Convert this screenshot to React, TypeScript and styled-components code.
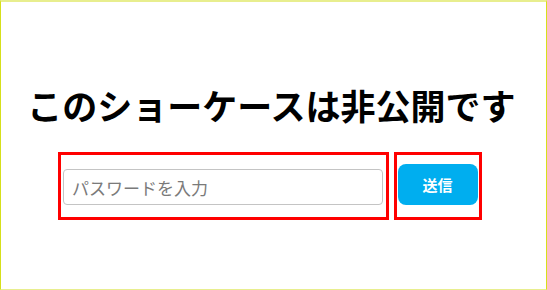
import React from 'react'
import styled, { createGlobalStyle } from 'styled-components'

const Global = createGlobalStyle`
html, body { margin: 0; padding: 0; background: #fff; }
body { font-family: "Noto Sans CJK JP", "Noto Sans", sans-serif; }
* { box-sizing: border-box; }
`

const Page = styled.div`
height: 290px;
border-top: 2px solid #e8ee8e;
border-left: 1px solid #d6e01a;
border-right: 1px solid #d6e01a;
border-bottom: 1px solid #e8ee8e;
display: flex;
flex-direction: column;
align-items: center;
padding-top: 78px;
padding-right: 4px;
`

const Title = styled.h1`
margin: 0;
font-size: 35px;
font-weight: 700;
line-height: 50px;
color: #000;
`

const Form = styled.div`
display: flex;
gap: 5px;
margin-top: 22px;
margin-left: -4px;
`

const Frame = styled.div<{ $w: number }>`
width: ${p => p.$w}px;
height: 68px;
border: 3px solid #ff0000;
display: flex;
align-items: center;
justify-content: center;
`

const Input = styled.input`
width: 320px;
height: 36px;
margin-top: 2px;
border: 1px solid #c4c4c4;
border-radius: 4px;
padding: 0 8px;
font-family: "Noto Sans CJK JP", sans-serif;
font-size: 17px;
color: #333;
outline: none;
&::placeholder { color: #7a7a7a; }
`

const Button = styled.button`
width: 80px;
height: 41px;
margin-top: -3px;
border: none;
border-radius: 8px;
background: #00aeef;
color: #fff;
font-family: "Noto Sans CJK JP", sans-serif;
font-size: 15px;
font-weight: 700;
cursor: pointer;
`

export default function App() {
  return (
    <Page>
      <Global />
      <Title>このショーケースは非公開です</Title>
      <Form>
        <Frame $w={331}>
          <Input type="password" placeholder="パスワードを入力" />
        </Frame>
        <Frame $w={88}>
          <Button>送信</Button>
        </Frame>
      </Form>
    </Page>
  )
}
